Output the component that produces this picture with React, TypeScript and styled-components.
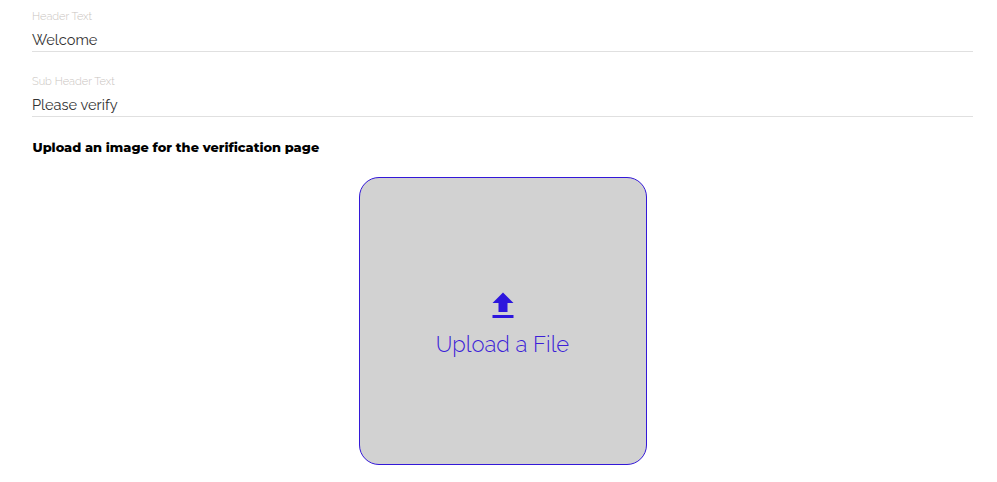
import React from "react";
import styled, { createGlobalStyle } from "styled-components";

const Global = createGlobalStyle`
  html, body { margin: 0; padding: 0; background: #fff; }
  body { font-family: Raleway, "Lato", "Open Sans", sans-serif; }
`;
const Page = styled.div`
  width: 997px; height: 482px; box-sizing: border-box; padding: 10px 24px 0 32px; overflow: hidden;
`;
const Field = styled.div`
  box-sizing: border-box; height: 42px; border-bottom: 1px solid #e0e0e0; display: flex; flex-direction: column;
  & + & { margin-top: 23px; }
`;
const Label = styled.label`
  font-size: 11px; font-weight: 300; line-height: 14px; color: #c9c4c0;
`;
const Value = styled.div`
  font-size: 14.6px; font-weight: 400; line-height: 20px; margin-top: 6px; color: #333;
`;
const Title = styled.h2`
  margin: 23px 0 0; padding-left: 0.5px; font: 800 12.9px/16px Montserrat, "Inter", "Liberation Sans", sans-serif; color: #000;
`;
const Center = styled.div`
  display: flex; justify-content: center; margin-top: 21px;
`;
const Upload = styled.button`
  width: 288px; height: 288px; box-sizing: border-box; background: #d2d2d2; border: 1px solid #3318d8; border-radius: 20px;
  display: flex; flex-direction: column; align-items: center; justify-content: center; color: #3c1fd8; font-family: inherit; padding: 0;
`;
const Icon = styled.svg`
  display: block; margin-top: 3px;
`;
const Text = styled.span`
  font-size: 22px; font-weight: 300; line-height: 28px; margin-top: 6px;
`;
export default function App() {
  return (
    <Page>
      <Global />
      <Field><Label>Header Text</Label><Value>Welcome</Value></Field>
      <Field><Label>Sub Header Text</Label><Value>Please verify</Value></Field>
      <Title>Upload an image for the verification page</Title>
      <Center>
        <Upload>
          <Icon width="36" height="36" viewBox="0 0 24 24" fill="#2d16dd"><path d="M9 16h6v-6h4l-7-7-7 7h4zm-4 2h14v2H5z"/></Icon>
          <Text>Upload a File</Text>
        </Upload>
      </Center>
    </Page>
  );
}
